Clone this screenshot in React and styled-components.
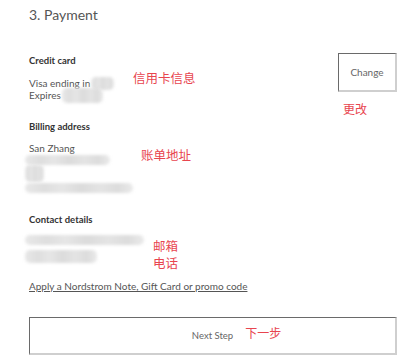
import React from "react";
import styled, { createGlobalStyle } from "styled-components";

const Global = createGlobalStyle`
  html, body { margin: 0; padding: 0; background: #fff; }
  body { font-family: Lato, "Noto Sans", sans-serif; color: #555; }
`;

const Page = styled.div`
  width: 368px;
  padding: 6px 10px 0 29px;
`;

const Title = styled.h2`
  margin: 0;
  font-size: 14px;
  line-height: 17px;
  font-weight: 400;
  color: #555;
`;

const CardRow = styled.div`
  display: flex;
  justify-content: space-between;
  align-items: flex-start;
  margin-top: 30px;
`;

const Column = styled.div`
  display: flex;
  flex-direction: column;
  align-items: flex-start;
  margin-top: ${(p) => p.$top || 0}px;
`;

const Section = styled.section`
  margin-top: ${(p) => p.$top || 0}px;
`;

const Heading = styled.h3`
  margin: 0 0 ${(p) => p.$gap}px;
  font-size: 9.5px;
  line-height: 12px;
  font-weight: 700;
  color: #333;
`;

const Details = styled.div`
  display: flex;
  align-items: flex-start;
`;

const Lines = styled.div`
  width: ${(p) => p.$w}px;
  flex: none;
  display: flex;
  flex-direction: column;
`;

const Line = styled.div`
  display: flex;
  align-items: center;
  font-size: 10px;
  line-height: 12px;
  color: #555;
  white-space: nowrap;
`;

const Blur = styled.div`
  width: ${(p) => p.$w}px;
  height: ${(p) => p.$h}px;
  margin: ${(p) => p.$m || "0"};
  flex: none;
  border-radius: 5px;
  background: linear-gradient(
    90deg,
    #e8e8e8 0%,
    #dedede 18%,
    #e6e6e6 34%,
    #dbdbdb 52%,
    #e4e4e4 70%,
    #dcdcdc 86%,
    #eaeaea 100%
  );
  filter: blur(1.4px);
`;

const NoteStack = styled.div`
  display: flex;
  flex-direction: column;
  gap: 4px;
  margin-top: ${(p) => p.$top || 0}px;
`;

const Note = styled.div`
  font-family: "Noto Sans CJK SC", sans-serif;
  font-size: ${(p) => p.$size || 12.5}px;
  line-height: ${(p) => p.$size || 12.5}px;
  color: #e8454f;
  margin-top: ${(p) => p.$top || 0}px;
  margin-left: ${(p) => p.$left || 0}px;
  white-space: nowrap;
`;

const OutlineButton = styled.button`
  box-sizing: border-box;
  background: #fff;
  font-family: Lato, sans-serif;
  font-size: 10px;
  color: #666;
  border-style: solid;
  border-width: 1px 2px 2px 1px;
  border-color: #6a6a6a #cfcfcf #cfcfcf #6a6a6a;
  padding: 0;
  cursor: pointer;
`;

const ChangeButton = styled(OutlineButton)`
  width: 59px;
  height: 39px;
`;

const NextButton = styled(OutlineButton)`
  display: grid;
  grid-template-columns: 1fr auto 1fr;
  align-items: center;
  width: 368px;
  height: 38px;
  margin-top: 25px;
  font-size: 9.5px;
`;

const NextNote = styled(Note)`
  justify-self: start;
  margin-bottom: 6px;
`;

const PromoLink = styled.a`
  display: block;
  margin-top: 11px;
  font-size: 10px;
  line-height: 12px;
  color: #555;
  text-decoration: underline;
  text-underline-offset: 1px;
`;

const BlobStack = styled.div`
  display: flex;
  flex-direction: column;
  gap: ${(p) => p.$gap || 0}px;
  margin: ${(p) => p.$m || "0"};
`;

export default function App() {
  return (
    <>
      <Global />
      <Page>
        <Title>3. Payment</Title>

        <CardRow>
          <Column $top={2}>
            <Heading $gap={10}>Credit card</Heading>
            <Details>
              <Lines $w={104}>
                <Line>
                  Visa ending in
                  <Blur $w={23} $h={13} $m="-1px 0 -1px 1px" />
                </Line>
                <Line>
                  Expires
                  <Blur $w={41} $h={15} $m="-2px 0 -2px 1px" />
                </Line>
              </Lines>
              <Note $top={-5}>信用卡信息</Note>
            </Details>
          </Column>
          <Column>
            <ChangeButton>Change</ChangeButton>
            <Note $size={12} $top={11} $left={5}>
              更改
            </Note>
          </Column>
        </CardRow>

        <Section $top={6}>
          <Heading $gap={9}>Billing address</Heading>
          <Details>
            <Lines $w={112}>
              <Line>San Zhang</Line>
              <BlobStack $m="1px 0 0 -4px">
                <Blur $w={85} $h={10} />
                <Blur $w={19} $h={17} />
                <Blur $w={108} $h={10} $m="1px 0 0 0" />
              </BlobStack>
            </Lines>
            <Note $top={7}>账单地址</Note>
          </Details>
        </Section>

        <Section $top={21}>
          <Heading $gap={9}>Contact details</Heading>
          <Details>
            <Lines $w={124}>
              <BlobStack $gap={5} $m="0 0 0 -4px">
                <Blur $w={119} $h={10} />
                <Blur $w={72} $h={13} />
              </BlobStack>
            </Lines>
            <NoteStack $top={5}>
              <Note>邮箱</Note>
              <Note>电话</Note>
            </NoteStack>
          </Details>
        </Section>

        <PromoLink href="#">Apply a Nordstrom Note, Gift Card or promo code</PromoLink>

        <NextButton>
          <span />
          <span>Next Step</span>
          <NextNote $size={12} $left={12}>
            下一步
          </NextNote>
        </NextButton>
      </Page>
    </>
  );
}
